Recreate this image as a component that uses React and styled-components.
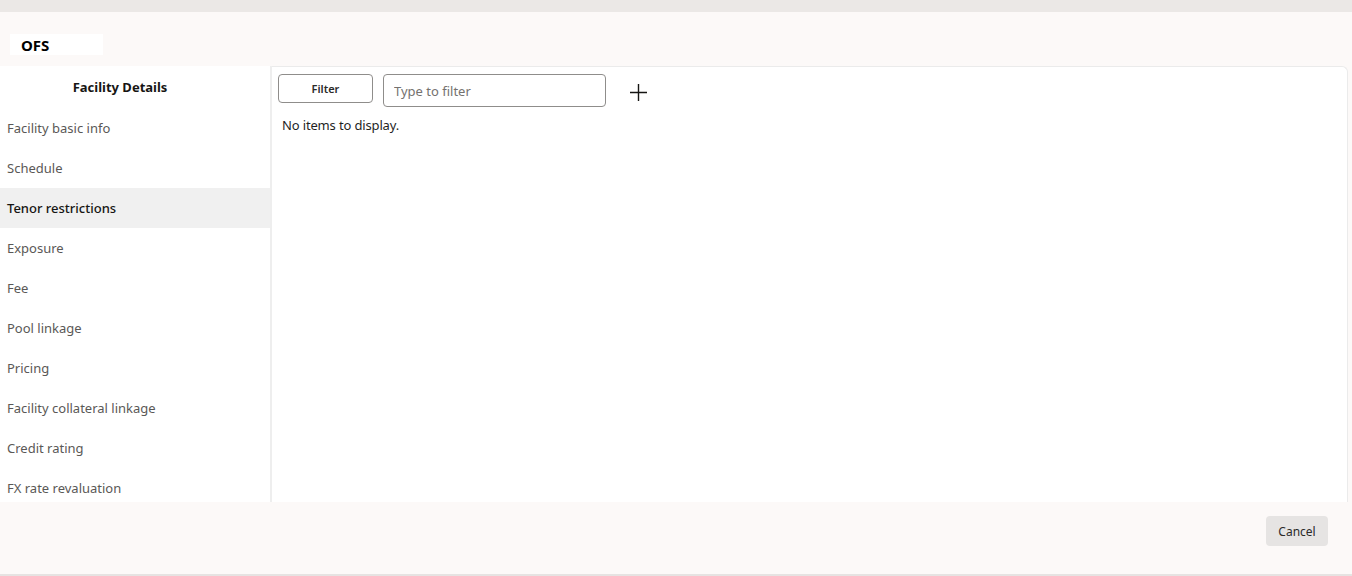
import React from "react";
import styled, { createGlobalStyle } from "styled-components";

const Global = createGlobalStyle`
  html, body {
    margin: 0;
    padding: 0;
    height: 100%;
    background: #fcf9f8;
  }
  #root {
    height: 100%;
  }
  * {
    box-sizing: border-box;
  }
`;

const Page = styled.div`
  height: 576px;
  display: flex;
  flex-direction: column;
  font-family: "Noto Sans", "Open Sans", sans-serif;
  color: #1f1f1f;
  background: #fcf9f8;
  border-bottom: 2px solid #e6e3e2;
`;

const TopStrip = styled.div`
  height: 12px;
  background: #ebe8e6;
`;

const Header = styled.div`
  height: 54px;
  display: flex;
  align-items: center;
  padding: 10px 10px 0 10px;
`;

const Brand = styled.div`
  width: 93px;
  height: 21px;
  background: #ffffff;
  display: flex;
  align-items: flex-end;
  padding-left: 11px;
  font-size: 15px;
  font-weight: 700;
  line-height: 19px;
  color: #000;
`;

const Body = styled.div`
  flex: 1;
  display: flex;
  min-height: 0;
`;

const Nav = styled.nav`
  width: 272px;
  background: #ffffff;
  border-right: 2px solid #eeeeee;
  overflow: hidden;
`;

const NavTitle = styled.div`
  width: 240px;
  height: 42px;
  display: flex;
  align-items: center;
  justify-content: center;
  font-size: 13px;
  font-weight: 700;
  color: #161513;
`;

const NavItem = styled.div`
  height: 40px;
  display: flex;
  align-items: center;
  padding-left: 7px;
  font-size: 13px;
  color: ${(p) => (p.active ? "#161513" : "#5a5856")};
  font-weight: ${(p) => (p.active ? 500 : 400)};
  background: ${(p) => (p.active ? "#f0f0f0" : "transparent")};
`;

const Main = styled.section`
  flex: 1;
  margin-right: 4px;
  background: #ffffff;
  border: 1px solid #ebebeb;
  border-left: none;
  border-bottom: none;
  border-top-right-radius: 6px;
  padding: 7px 6px 0 6px;
`;

const Toolbar = styled.div`
  display: flex;
  align-items: flex-start;
  gap: 10px;
`;

const FilterButton = styled.button`
  width: 95px;
  height: 29px;
  background: #ffffff;
  border: 1px solid #8f8d8b;
  border-radius: 4px;
  font-family: inherit;
  font-size: 11px;
  font-weight: 600;
  color: #2b2a29;
  cursor: pointer;
`;

const FilterInput = styled.input`
  width: 223px;
  height: 33px;
  border: 1px solid #8f8d8b;
  border-radius: 4px;
  padding: 0 10px;
  font-family: inherit;
  font-size: 13px;
  color: #1f1f1f;
  &::placeholder {
    color: #75726f;
  }
`;

const AddButton = styled.button`
  width: 40px;
  height: 36px;
  margin-left: 2px;
  background: transparent;
  border: none;
  display: flex;
  align-items: center;
  justify-content: center;
  padding: 0;
  cursor: pointer;
`;

const Empty = styled.div`
  margin-top: 6px;
  padding-left: 4px;
  font-size: 13px;
  letter-spacing: -0.15px;
  color: #1f1f1f;
`;

const Footer = styled.div`
  height: 72px;
  display: flex;
  justify-content: flex-end;
  align-items: flex-start;
  padding: 14px 24px 0 0;
`;

const CancelButton = styled.button`
  width: 62px;
  height: 30px;
  background: #e6e4e3;
  border: none;
  border-radius: 4px;
  font-family: inherit;
  font-size: 12px;
  color: #2b2a29;
  cursor: pointer;
`;

const items = [
  "Facility basic info",
  "Schedule",
  "Tenor restrictions",
  "Exposure",
  "Fee",
  "Pool linkage",
  "Pricing",
  "Facility collateral linkage",
  "Credit rating",
  "FX rate revaluation",
];

export default function App() {
  return (
    <Page>
      <Global />
      <TopStrip />
      <Header>
        <Brand>OFS</Brand>
      </Header>
      <Body>
        <Nav>
          <NavTitle>Facility Details</NavTitle>
          {items.map((item) => (
            <NavItem key={item} active={item === "Tenor restrictions"}>
              {item}
            </NavItem>
          ))}
        </Nav>
        <Main>
          <Toolbar>
            <FilterButton>Filter</FilterButton>
            <FilterInput placeholder="Type to filter" />
            <AddButton aria-label="Add">
              <svg width="19" height="19" viewBox="0 0 19 19">
                <path d="M9.5 1v17M1 9.5h17" stroke="#161513" strokeWidth="1.4" fill="none" />
              </svg>
            </AddButton>
          </Toolbar>
          <Empty>No items to display.</Empty>
        </Main>
      </Body>
      <Footer>
        <CancelButton>Cancel</CancelButton>
      </Footer>
    </Page>
  );
}
